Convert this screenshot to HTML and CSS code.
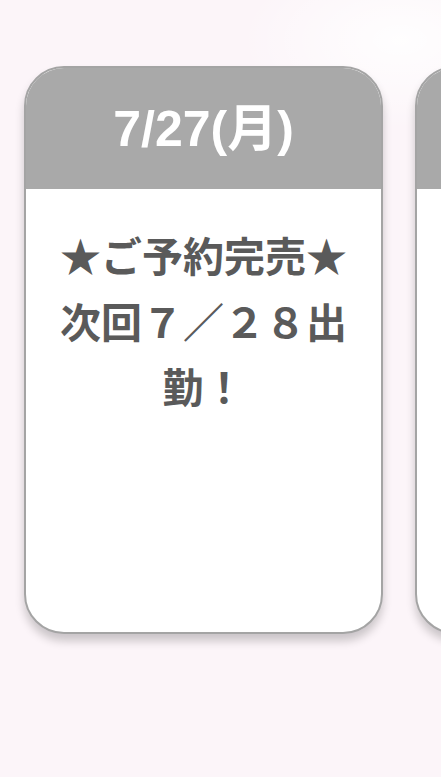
FILE: index.html
```html
<!DOCTYPE html>
<html lang="ja">
<head>
<meta charset="utf-8">
<title>出勤スケジュール</title>
<link rel="stylesheet" href="styles.css">
</head>
<body>
<div class="track">
  <div class="card">
    <div class="card-head">7/27(月)</div>
    <div class="card-body">★ご予約完売★次回７／２８出勤！</div>
  </div>
  <div class="card">
    <div class="card-head"></div>
    <div class="card-body"></div>
  </div>
</div>
</body>
</html>
```
FILE: styles.css
```css
html, body {
  margin: 0;
  padding: 0;
}
body {
  width: 441px;
  height: 777px;
  overflow: hidden;
  background:
    radial-gradient(ellipse 160px 90px at 400px 40px, rgba(255,255,255,0.9), rgba(255,255,255,0) 100%),
    #fcf5f9;
  font-family: "Liberation Sans", "Noto Sans CJK JP", sans-serif;
}
.track {
  display: flex;
  gap: 32px;
  padding: 66px 0 40px 24px;
  overflow: hidden;
}
.card {
  flex: 0 0 359px;
  box-sizing: border-box;
  height: 568px;
  border: 2px solid #a4a4a4;
  border-radius: 40px;
  background: #ffffff;
  overflow: hidden;
  box-shadow: 0 7px 10px rgba(0, 0, 0, 0.2);
}
.card-head {
  height: 121px;
  background: #a9a9a9;
  color: #ffffff;
  font-weight: bold;
  font-size: 50px;
  display: flex;
  align-items: center;
  justify-content: center;
  padding-bottom: 10px;
  box-sizing: border-box;
}
.card-body {
  padding: 33px 20px 0;
  text-align: center;
  color: #5a5a5a;
  font-family: "Noto Sans CJK JP", sans-serif;
  font-weight: bold;
  font-size: 41px;
  line-height: 1.6;
}
```
